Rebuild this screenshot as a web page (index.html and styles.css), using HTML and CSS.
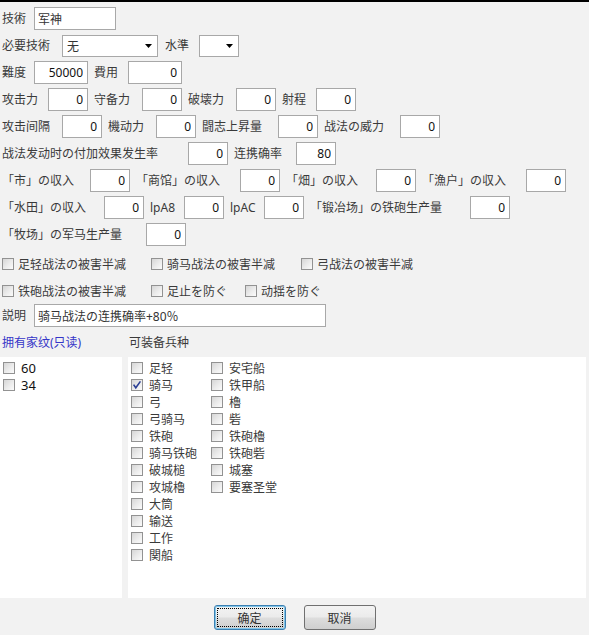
FILE: index.html
```html
<!DOCTYPE html>
<html lang="zh">
<head>
<meta charset="utf-8">
<title>技術</title>
<link rel="stylesheet" href="styles.css">
</head>
<body>
<div class="topline"></div>
<div class="form">
  <div class="row">
    <span class="lbl w32">技術</span><input class="in left w82" type="text" value="军神">
  </div>
  <div class="row">
    <span class="lbl w60">必要技術</span>
    <div class="sel w96"><span>无</span><svg class="arrow" width="7" height="4" viewBox="0 0 7 4"><polygon points="0,0 7,0 3.5,4"/></svg></div>
    <span class="lbl w34">水準</span>
    <div class="sel w40"><span></span><svg class="arrow" width="7" height="4" viewBox="0 0 7 4"><polygon points="0,0 7,0 3.5,4"/></svg></div>
  </div>
  <div class="row">
    <span class="lbl w32">難度</span><input class="in w54" type="text" value="50000">
    <span class="lbl w34">費用</span><input class="in w54" type="text" value="0">
  </div>
  <div class="row">
    <span class="lbl w46">攻击力</span><input class="in w40" type="text" value="0">
    <span class="lbl w48">守备力</span><input class="in w40" type="text" value="0">
    <span class="lbl w48">破壊力</span><input class="in w40" type="text" value="0">
    <span class="lbl w34">射程</span><input class="in w40" type="text" value="0">
  </div>
  <div class="row">
    <span class="lbl w60">攻击间隔</span><input class="in w40" type="text" value="0">
    <span class="lbl w48">機动力</span><input class="in w40" type="text" value="0">
    <span class="lbl w76">闘志上昇量</span><input class="in w40" type="text" value="0">
    <span class="lbl w76">战法の威力</span><input class="in w40" type="text" value="0">
  </div>
  <div class="row">
    <span class="lbl w186">战法发动时の付加效果发生率</span><input class="in w40" type="text" value="0">
    <span class="lbl w62">连携确率</span><input class="in w40" type="text" value="80">
  </div>
  <div class="row">
    <span class="lbl w88">「市」の収入</span><input class="in w40" type="text" value="0">
    <span class="lbl w104">「商馆」の収入</span><input class="in w40" type="text" value="0">
    <span class="lbl w90">「畑」の収入</span><input class="in w40" type="text" value="0">
    <span class="lbl w104">「漁户」の収入</span><input class="in w40" type="text" value="0">
  </div>
  <div class="row">
    <span class="lbl w102">「水田」の収入</span><input class="in w40" type="text" value="0">
    <span class="lbl w34">lpA8</span><input class="in w40" type="text" value="0">
    <span class="lbl w34">lpAC</span><input class="in w40" type="text" value="0">
    <span class="lbl w160">「锻冶场」の铁砲生产量</span><input class="in w40" type="text" value="0">
  </div>
  <div class="row">
    <span class="lbl w144">「牧场」の军马生产量</span><input class="in w40" type="text" value="0">
  </div>
  <div class="cbrow cbrow1">
    <label class="cb"><span class="box"></span>足轻战法の被害半减</label>
    <label class="cb"><span class="box"></span>骑马战法の被害半减</label>
    <label class="cb"><span class="box"></span>弓战法の被害半减</label>
  </div>
  <div class="cbrow cbrow2">
    <label class="cb"><span class="box"></span>铁砲战法の被害半减</label>
    <label class="cb"><span class="box"></span>足止を防ぐ</label>
    <label class="cb"><span class="box"></span>动揺を防ぐ</label>
  </div>
  <div class="row desc">
    <span class="lbl w32">説明</span><input class="in left w292" type="text" value="骑马战法の连携确率+80％">
  </div>
  <div class="heads">
    <span class="blue">拥有家纹(只读)</span>
    <span>可装备兵种</span>
  </div>
  <div class="lists">
    <div class="list leftlist">
      <div class="item"><span class="box"></span><span class="itxt">60</span></div>
      <div class="item"><span class="box"></span><span class="itxt">34</span></div>
    </div>
    <div class="list rightlist">
      <div class="col col1">
        <div class="item"><span class="box"></span><span class="itxt">足轻</span></div>
        <div class="item"><span class="box checked"><svg width="10" height="10" viewBox="0 0 10 10"><path d="M1.6 4.6 L3.8 7.8 L8.4 1.4" fill="none" stroke="#2b3f95" stroke-width="1.6"/></svg></span><span class="itxt">骑马</span></div>
        <div class="item"><span class="box"></span><span class="itxt">弓</span></div>
        <div class="item"><span class="box"></span><span class="itxt">弓骑马</span></div>
        <div class="item"><span class="box"></span><span class="itxt">铁砲</span></div>
        <div class="item"><span class="box"></span><span class="itxt">骑马铁砲</span></div>
        <div class="item"><span class="box"></span><span class="itxt">破城槌</span></div>
        <div class="item"><span class="box"></span><span class="itxt">攻城櫓</span></div>
        <div class="item"><span class="box"></span><span class="itxt">大筒</span></div>
        <div class="item"><span class="box"></span><span class="itxt">输送</span></div>
        <div class="item"><span class="box"></span><span class="itxt">工作</span></div>
        <div class="item"><span class="box"></span><span class="itxt">関船</span></div>
      </div>
      <div class="col">
        <div class="item"><span class="box"></span><span class="itxt">安宅船</span></div>
        <div class="item"><span class="box"></span><span class="itxt">铁甲船</span></div>
        <div class="item"><span class="box"></span><span class="itxt">櫓</span></div>
        <div class="item"><span class="box"></span><span class="itxt">砦</span></div>
        <div class="item"><span class="box"></span><span class="itxt">铁砲櫓</span></div>
        <div class="item"><span class="box"></span><span class="itxt">铁砲砦</span></div>
        <div class="item"><span class="box"></span><span class="itxt">城塞</span></div>
        <div class="item"><span class="box"></span><span class="itxt">要塞圣堂</span></div>
      </div>
    </div>
  </div>
  <div class="buttons">
    <button class="btn primary" type="button">确定</button>
    <button class="btn" type="button">取消</button>
  </div>
</div>
</body>
</html>
```
FILE: styles.css
```css
* { box-sizing: border-box; }

html, body {
  margin: 0;
  padding: 0;
}

body {
  width: 589px;
  height: 635px;
  overflow: hidden;
  background: #f2f2f2;
  font-family: "Noto Sans", "Noto Sans CJK SC", sans-serif;
  font-size: 12px;
  color: #3a3a3a;
}

.topline {
  height: 2px;
  background: #000;
}

.form {
  display: flex;
  flex-direction: column;
  gap: 4px;
  padding-top: 5px;
}

.row {
  display: flex;
  align-items: center;
  height: 23px;
  padding-left: 2px;
}

.lbl {
  flex: none;
  white-space: nowrap;
  line-height: 23px;
}

.in {
  flex: none;
  height: 23px;
  margin: 0 6px 0 0;
  padding: 0 4px 0 3px;
  border: 1px solid #a8a8a8;
  border-radius: 0;
  background: #fff;
  font-family: inherit;
  font-size: 12px;
  color: #111;
  text-align: right;
  outline: none;
}

.in.left { text-align: left; padding-left: 3px; color: #333; }

.sel {
  flex: none;
  height: 22px;
  margin-right: 7px;
  padding: 0 5px 0 4px;
  border: 1px solid #a8a8a8;
  background: #fff;
  display: flex;
  align-items: center;
  justify-content: space-between;
  color: #333;
}

.arrow { display: block; fill: #000; }

.w32 { width: 32px; }
.w34 { width: 34px; }
.w40 { width: 40px; }
.w46 { width: 46px; }
.w48 { width: 48px; }
.w54 { width: 54px; }
.w60 { width: 60px; }
.w62 { width: 62px; }
.w76 { width: 76px; }
.w82 { width: 82px; }
.w88 { width: 88px; }
.w90 { width: 90px; }
.w96 { width: 96px; }
.w102 { width: 102px; }
.w104 { width: 104px; }
.w144 { width: 144px; }
.w160 { width: 160px; }
.w186 { width: 186px; }
.w292 { width: 292px; }

.cbrow {
  display: grid;
  height: 23px;
  padding-left: 2px;
  align-items: center;
}

.cbrow1 { grid-template-columns: 149px 150px auto; margin-top: 2px; }
.cbrow2 { grid-template-columns: 149px 94px auto; }

.cb {
  display: flex;
  align-items: center;
  white-space: nowrap;
}

.box {
  flex: none;
  width: 12px;
  height: 12px;
  border: 1px solid #929292;
  background: linear-gradient(135deg, #d6d6d6 0%, #ececec 55%, #fbfbfb 100%);
  display: flex;
  align-items: center;
  justify-content: center;
}

.cb .box { margin-right: 4px; }

.box.checked svg { display: block; }

.desc { margin-top: -2px; }

.heads {
  display: grid;
  grid-template-columns: 127px auto;
  height: 22px;
  align-items: center;
  padding-left: 2px;
}

.blue { color: #3535c8; }

.lists {
  display: flex;
  height: 241px;
}

.list {
  background: #fff;
  height: 100%;
  padding: 2px 0 0 3px;
}

.leftlist {
  width: 122px;
  display: flex;
  flex-direction: column;
}

.rightlist {
  width: 458px;
  margin-left: 6px;
  display: flex;
}

.col { display: flex; flex-direction: column; }
.col1 { width: 80px; }

.item {
  display: flex;
  align-items: center;
  height: 17px;
  white-space: nowrap;
}

.itxt { margin-left: 6px; color: #3a3a3a; }

.leftlist .itxt { font-size: 13px; color: #111; }

.buttons {
  display: flex;
  justify-content: center;
  gap: 18px;
  margin-top: 3px;
}

.btn {
  position: relative;
  width: 72px;
  height: 25px;
  padding: 0;
  border: 1px solid #707070;
  border-radius: 3px;
  background: linear-gradient(#f3f3f3 0%, #ebebeb 48%, #dddddd 52%, #cfcfcf 100%);
  font-family: inherit;
  font-size: 12px;
  color: #333;
}

.btn.primary {
  border-color: #3c7fb1;
  box-shadow: inset 0 0 0 1px #7fc4e8;
}

.btn.primary::after {
  content: "";
  position: absolute;
  inset: 2px;
  border: 1px dotted #000;
}
```
